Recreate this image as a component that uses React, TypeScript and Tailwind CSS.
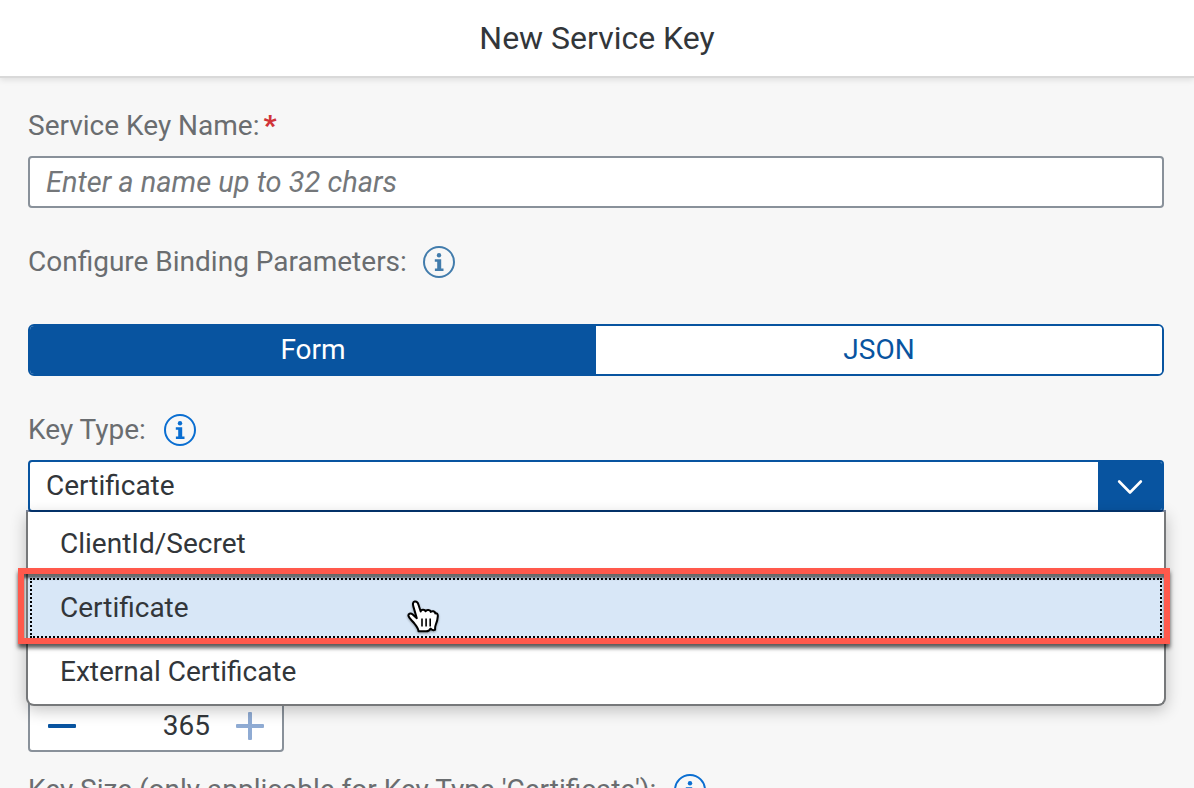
import { useState } from "react";

const KEY_TYPES = ["ClientId/Secret", "Certificate", "External Certificate"];

function InfoIcon() {
  return (
    <svg viewBox="0 0 32 32" className="size-8" fill="none" aria-hidden="true">
      <circle cx="16" cy="16" r="15" stroke="currentColor" strokeWidth="2" />
      <circle cx="16" cy="9.2" r="2.2" fill="currentColor" />
      <path d="M11.800 13.200h6.400v9.300h2.300V25h-8.600v-2.500h2.300v-6.800h-2.400z" fill="currentColor" />
    </svg>
  );
}

function PointerHand() {
  return (
    <svg
      viewBox="0 0 34 36"
      className="pointer-events-none absolute -top-1 left-1/3 h-9 w-[34px] drop-shadow-[0_1px_1px_rgba(0,0,0,0.35)]"
      aria-hidden="true"
    >
      <path
        d="M9.800 18.200 6.400 6.600C5.600 3.700 5.900 2 7.700 1.600c1.900-.4 3 .7 3.700 2.900l2.300 7c.2-2.200 4.100-2.400 4.900-.2 1-1.900 4.600-1.600 5.200.6 1.200-1.400 4.200-.7 4.500 1.500 1.700-.5 2.700.8 2.500 3-.2 3.500-.8 5.600-2.100 8.400-.7 1.600-.7 3-.6 5-1.900.7-3.400.5-4.500-1.300-1.200 2.500-3.500 3-5.300 2.800-2.500-.1-4.700.2-6.800-.1-.2-2.900-1.900-4.900-4-7.600-2.200-3-5.500-5.200-6-7.600-.6-2.200 2.100-3.200 4.200-1.500z"
        fill="#fff"
        stroke="#000"
        strokeWidth="2"
        strokeLinejoin="round"
      />
      <path d="M15 18.500v8M19.100 18.500v8M23.200 18.500v8" stroke="#000" strokeWidth="1.600" />
    </svg>
  );
}

export default function App() {
  const [mode, setMode] = useState("Form");
  const [selected, setSelected] = useState("Certificate");
  const [days, setDays] = useState("365");

  return (
    <div className="flex h-screen flex-col bg-[#f7f7f7] font-[Roboto,sans-serif] text-[28px] leading-8 text-[#32363a]">
      <header className="z-10 border-b-2 border-[#d9d9d9] bg-white py-[18px] text-center shadow-[0_2px_6px_rgba(0,0,0,0.1)]">
        <h1 className="text-[32px] leading-10">New Service Key</h1>
      </header>

      <main className="flex-1 overflow-y-auto px-7 pt-8 [scrollbar-width:none] sm:pr-[30px]">
        <label htmlFor="key-name" className="block text-[#6a6d70]">
          Service Key Name:
          <span className="ml-1 font-black text-[#d13438]">*</span>
        </label>
        <input
          id="key-name"
          type="text"
          placeholder="Enter a name up to 32 chars"
          className="mt-[14px] block h-[52px] w-full rounded-sm border-2 border-[#89919a] bg-white px-4 text-[29px] outline-none placeholder:text-[#74777a] placeholder:italic"
        />

        <div className="mt-[38px] flex h-8 items-center gap-4 text-[#6a6d70]">
          <span>Configure Binding Parameters:</span>
          <button type="button" aria-label="About binding parameters" className="text-[#427cac]">
            <InfoIcon />
          </button>
        </div>

        <div className="mt-[46px] grid h-[52px] grid-cols-2 overflow-hidden rounded-md border-2 border-[#0854a0] bg-white">
          {["Form", "JSON"].map((name) => (
            <button
              key={name}
              type="button"
              aria-pressed={mode === name}
              onClick={() => setMode(name)}
              className={mode === name ? "bg-[#0854a0] text-white" : "bg-white text-[#0854a0]"}
            >
              {name}
            </button>
          ))}
        </div>

        <div className="mt-[38px] flex h-8 items-center gap-[18px] text-[#6a6d70]">
          <label htmlFor="key-type">Key Type:</label>
          <button type="button" aria-label="About key type" className="text-[#0a6ed1]">
            <InfoIcon />
          </button>
        </div>

        <div className="relative z-10 mt-[14px]">
          <div className="flex h-[52px] overflow-hidden rounded-sm border-2 border-[#0854a0] bg-white">
            <input
              id="key-type"
              role="combobox"
              aria-expanded="true"
              aria-controls="key-type-list"
              readOnly
              value={selected}
              className="min-w-0 flex-1 px-4 outline-none"
            />
            <button
              type="button"
              aria-label="Show key types"
              className="flex w-16 items-center justify-center bg-[#0854a0] text-white"
            >
              <svg viewBox="0 0 26 16" className="h-4 w-[26px]" fill="none" aria-hidden="true">
                <path
                  d="m2.200 3.500 10.800 11L23.800 3.500"
                  stroke="currentColor"
                  strokeWidth="2.600"
                  strokeLinecap="round"
                  strokeLinejoin="round"
                />
              </svg>
            </button>
          </div>

          <ul
            id="key-type-list"
            role="listbox"
            aria-label="Key Type"
            className="absolute top-full -right-[2px] -left-[2px] rounded-b-lg border-2 border-t-0 border-[#76787a] bg-white shadow-[0_-2px_0_rgba(0,20,60,0.5),0_4px_16px_rgba(0,0,0,0.24)]"
          >
            {KEY_TYPES.map((name) => (
              <li
                key={name}
                role="option"
                aria-selected={selected === name}
                onClick={() => setSelected(name)}
                className={
                  selected === name
                    ? "relative z-10 flex h-16 items-center bg-[#d8e7f7] px-8 outline-2 -outline-offset-4 outline-black outline-dotted"
                    : "flex h-16 items-center px-8"
                }
              >
                {name}
                {selected === name && (
                  <>
                    <span className="pointer-events-none absolute -top-2 -right-[6px] -bottom-1 -left-[10px] border-[6px] border-[#ff594c] shadow-[0_4px_4px_rgba(0,0,0,0.65),inset_0_4px_3px_rgba(0,0,0,0.6)]" />
                    <span className="pointer-events-none absolute inset-x-0 top-7">
                      <PointerHand />
                    </span>
                  </>
                )}
              </li>
            ))}
          </ul>
        </div>

        <div className="mt-[188px] flex h-[52px] w-64 rounded-sm border-2 border-[#89919a] bg-white">
          <button
            type="button"
            aria-label="Decrease"
            onClick={() => setDays(String(Number(days) - 1))}
            className="flex w-16 shrink-0 items-center justify-center text-[#0854a0]"
          >
            <svg viewBox="0 0 28 28" className="size-7" aria-hidden="true">
              <rect y="12" width="28" height="4" rx="1" fill="currentColor" />
            </svg>
          </button>
          <input
            type="text"
            inputMode="numeric"
            aria-label="Validity in days"
            value={days}
            onChange={(e) => setDays(e.target.value)}
            className="min-w-0 flex-1 pr-2 text-right outline-none"
          />
          <button
            type="button"
            aria-label="Increase"
            disabled
            className="flex w-16 shrink-0 items-center justify-center text-[#8fabd3]"
          >
            <svg viewBox="0 0 28 28" className="size-7" aria-hidden="true">
              <rect y="12" width="28" height="4" rx="1" fill="currentColor" />
              <rect x="12" width="4" height="28" rx="1" fill="currentColor" />
            </svg>
          </button>
        </div>

        <div className="mt-[22px] flex h-8 items-center gap-[18px] text-[#6a6d70]">
          <span>Key Size (only applicable for Key Type 'Certificate'):</span>
          <button type="button" aria-label="About key size" className="text-[#0a6ed1]">
            <InfoIcon />
          </button>
        </div>
      </main>
    </div>
  );
}
